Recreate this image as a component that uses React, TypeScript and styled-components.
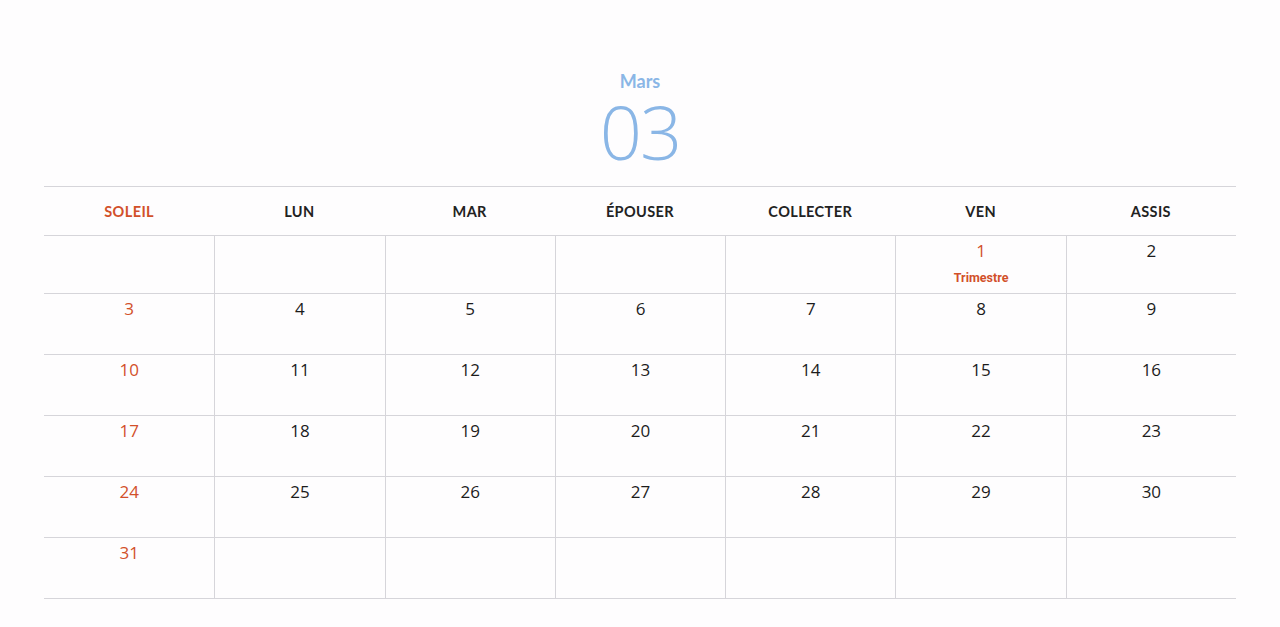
import React from "react";
import styled, { createGlobalStyle } from "styled-components";

const GlobalStyle = createGlobalStyle`
  html, body {
    margin: 0;
    padding: 0;
    background: #fefdfe;
  }
  body {
    font-family: "Open Sans", "Noto Sans", sans-serif;
    color: #1c1c1c;
  }
`;

const ORANGE = "#d2502a";
const LINE = "#d6d5da";

const Page = styled.main`
  width: 1280px;
  height: 627px;
  box-sizing: border-box;
  padding: 70px 44px 0;
  display: flex;
  flex-direction: column;
  align-items: stretch;
`;

const Title = styled.header`
  display: flex;
  flex-direction: column;
  align-items: center;
  color: #8ab6e6;
  margin-bottom: 22px;
`;

const MonthName = styled.div`
  font-family: "Lato", "Open Sans", sans-serif;
  font-weight: 700;
  font-size: 18px;
  line-height: 22px;
`;

const MonthNumber = styled.div`
  font-family: "Open Sans", sans-serif;
  font-weight: 300;
  font-size: 74px;
  line-height: 64px;
  margin-top: 8px;
  letter-spacing: -2px;
`;

const Grid = styled.div`
  display: grid;
  grid-template-columns: repeat(7, 1fr);
  border-top: 1px solid ${LINE};
`;

const DayHead = styled.div<{ $weekend?: boolean }>`
  height: 48px;
  display: flex;
  align-items: center;
  justify-content: center;
  border-bottom: 1px solid ${LINE};
  font-family: "Lato", sans-serif;
  font-weight: 700;
  font-size: 14.5px;
  letter-spacing: 0.4px;
  color: ${(p) => (p.$weekend ? ORANGE : "#222")};
`;

const Cell = styled.div<{ $first?: boolean; $short?: boolean }>`
  height: ${(p) => (p.$short ? 58 : 61)}px;
  box-sizing: border-box;
  border-bottom: 1px solid ${LINE};
  border-left: ${(p) => (p.$first ? "none" : `1px solid ${LINE}`)};
  display: flex;
  flex-direction: column;
  align-items: center;
  padding-top: 2px;
`;

const DayNum = styled.span<{ $red?: boolean }>`
  font-size: 17px;
  line-height: 26px;
  color: ${(p) => (p.$red ? ORANGE : "#1c1c1c")};
`;

const Holiday = styled.span`
  font-family: "Roboto", sans-serif;
  font-weight: 700;
  font-size: 12.5px;
  line-height: 16px;
  margin-top: 6px;
  color: ${ORANGE};
`;

const days = ["SOLEIL", "LUN", "MAR", "ÉPOUSER", "COLLECTER", "VEN", "ASSIS"];

type Day = { n: number | null; red?: boolean; note?: string };

const buildWeeks = (): Day[][] => {
  const cells: Day[] = [];
  for (let i = 0; i < 5; i++) cells.push({ n: null });
  for (let d = 1; d <= 31; d++) {
    const col = cells.length % 7;
    cells.push({
      n: d,
      red: col === 0 || d === 1,
      note: d === 1 ? "Trimestre" : undefined,
    });
  }
  while (cells.length % 7 !== 0) cells.push({ n: null });
  const weeks: Day[][] = [];
  for (let i = 0; i < cells.length; i += 7) weeks.push(cells.slice(i, i + 7));
  return weeks;
};

export default function App() {
  const weeks = buildWeeks();
  return (
    <>
      <GlobalStyle />
      <Page>
        <Title>
          <MonthName>Mars</MonthName>
          <MonthNumber>03</MonthNumber>
        </Title>
        <Grid>
          {days.map((d, i) => (
            <DayHead key={d} $weekend={i === 0}>
              {d}
            </DayHead>
          ))}
          {weeks.map((week, wi) =>
            week.map((day, di) => (
              <Cell key={`${wi}-${di}`} $first={di === 0} $short={wi === 0}>
                {day.n !== null && <DayNum $red={day.red}>{day.n}</DayNum>}
                {day.note && <Holiday>{day.note}</Holiday>}
              </Cell>
            ))
          )}
        </Grid>
      </Page>
    </>
  );
}
